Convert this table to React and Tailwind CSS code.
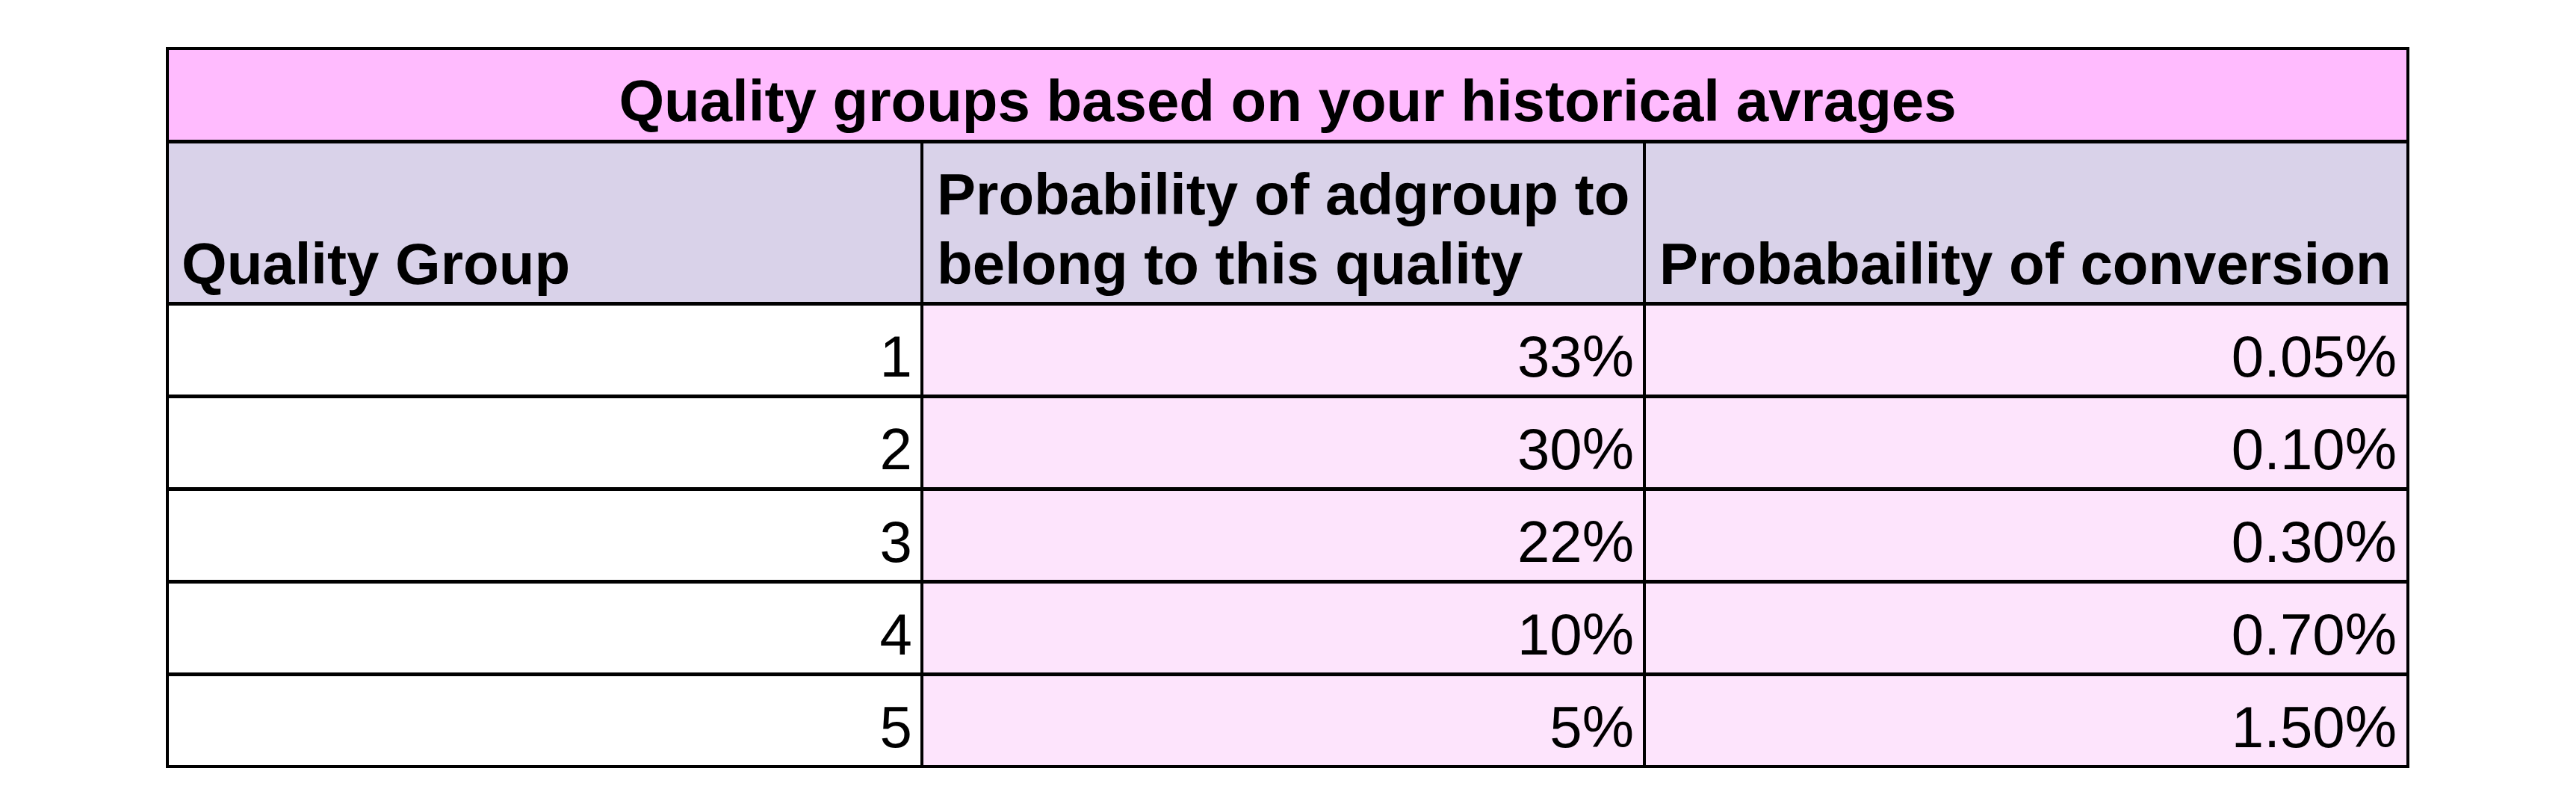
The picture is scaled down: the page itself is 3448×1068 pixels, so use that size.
import React from 'react';

const ROWS = [
  { group: 1, share: '33%', conv: '0.05%' },
  { group: 2, share: '30%', conv: '0.10%' },
  { group: 3, share: '22%', conv: '0.30%' },
  { group: 4, share: '10%', conv: '0.70%' },
  { group: 5, share: '5%', conv: '1.50%' },
];

export default function App() {
  return (
    <div
      className="min-h-screen w-full bg-white pl-[222px] pt-[63px] text-black"
      style={{ fontFamily: '"Liberation Sans", Arial, sans-serif' }}
    >
      <div className="grid w-fit grid-cols-[1006px_963px_1018px] gap-x-[4px] gap-y-[5px] bg-black p-[4px] text-[78px] leading-[93px]">
        {/* title */}
        <div className="col-span-3 flex h-[120px] items-end justify-center bg-[#ffbbfe] pb-[5px] font-bold">
          Quality groups based on your historical avrages
        </div>

        {/* header */}
        <div className="flex h-[212px] items-end bg-[#d9d2e9] pb-[4px] pl-[17px] font-bold">Quality Group</div>
        <div className="flex h-[212px] items-end bg-[#d9d2e9] pb-[4px] pl-[18px] pr-1 font-bold">
          Probability of adgroup to belong to this quality
        </div>
        <div className="flex h-[212px] items-end bg-[#d9d2e9] pb-[4px] pl-[18px] font-bold">
          Probabaility of conversion
        </div>

        {/* rows */}
        {ROWS.map(r => (
          <React.Fragment key={r.group}>
            <div className="flex h-[119px] items-end justify-end bg-white pb-[4px] pr-[11px]">{r.group}</div>
            <div className="flex h-[119px] items-end justify-end bg-[#fde4fc] pb-[4px] pr-[12px]">{r.share}</div>
            <div className="flex h-[119px] items-end justify-end bg-[#fde4fc] pb-[4px] pr-[13px]">{r.conv}</div>
          </React.Fragment>
        ))}
      </div>
    </div>
  );
}
